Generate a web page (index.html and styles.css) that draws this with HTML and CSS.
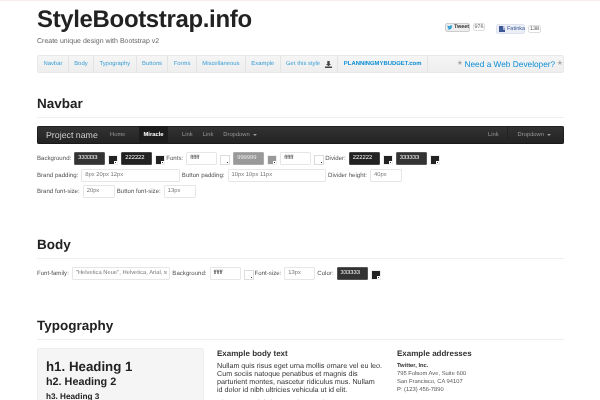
FILE: index.html
```html
<!DOCTYPE html>
<html lang="en">
<head>
<meta charset="utf-8">
<title>StyleBootstrap.info</title>
<link rel="stylesheet" href="styles.css">
</head>
<body>
<div class="page">
  <header class="masthead">
    <div class="brand-block">
      <h1 class="site-title">StyleBootstrap.info</h1>
      <p class="tagline">Create unique design with Bootstrap v2</p>
    </div>
    <div class="social">
      <span class="tweet"><svg class="bird" viewBox="0 0 10 8"><path d="M0 6.800c3 1.600 8 .4 8.300-4.600L9.500 1 8.200 1.200C7.300-.2 5-.2 4.800 2 3.300 2 2 1.200 1 .2c-.6 1.200-.2 2.300.6 3L.8 3c0 1 .7 1.700 1.500 2H1.500c.3.700 1 1.100 1.700 1.100C2.300 6.800 1.200 7 0 6.800z"/></svg>Tweet</span>
      <span class="count count-tw">976</span>
      <span class="fb"><span class="fb-logo">f</span>Fatinka</span>
      <span class="count count-fb">138</span>
    </div>
  </header>

  <nav class="subnav">
    <a class="nav-item">Navbar</a>
    <a class="nav-item">Body</a>
    <a class="nav-item">Typography</a>
    <a class="nav-item">Buttons</a>
    <a class="nav-item">Forms</a>
    <a class="nav-item">Miscellaneous</a>
    <a class="nav-item">Example</a>
    <a class="nav-item">Get this style <svg class="dl" viewBox="0 0 7 7"><path d="M2.300 0h2.400v3h1.300L3.500 5.300 1 3h1.300zM0 5.500h7V7H0z"/></svg></a>
    <a class="nav-item nav-strong">PLANNINGMYBUDGET.com</a>
    <div class="nav-ad"><span class="star">★</span><a class="ad-link">Need a Web Developer?</a><span class="star">★</span></div>
  </nav>

  <section class="sec sec-navbar">
    <h2 class="sec-title">Navbar</h2>
    <div class="demo-bar">
      <span class="demo-brand">Project name</span>
      <a class="demo-link demo-home">Home</a>
      <a class="demo-link demo-active">Miracle</a>
      <a class="demo-link demo-first">Link</a>
      <a class="demo-link">Link</a>
      <a class="demo-link">Dropdown <i class="caret"></i></a>
      <a class="demo-link demo-right">Link</a>
      <a class="demo-link demo-drop">Dropdown <i class="caret"></i></a>
    </div>
    <div class="row">
      <span class="lbl">Background:</span><span class="fld w31 dk3">333333</span><span class="pick pick-dark"></span>
      <span class="fld w31 dk2">222222</span><span class="pick pick-dark tight"></span>
      <span class="lbl">Fonts:</span><span class="fld w31 lt">ffffff</span><span class="pick pick-light"></span>
      <span class="fld w31 gr">999999</span><span class="pick pick-gray"></span>
      <span class="fld w31 lt">ffffff</span><span class="pick pick-light tight"></span>
      <span class="lbl">Divider:</span><span class="fld w31 dk2">222222</span><span class="pick pick-dark"></span>
      <span class="fld w31 dk3">333333</span><span class="pick pick-dark"></span>
    </div>
    <div class="row">
      <span class="lbl">Brand padding:</span><span class="fld w99">8px 20px 12px</span>
      <span class="lbl after">Button padding:</span><span class="fld w99">10px 10px 11px</span>
      <span class="lbl after">Divider height:</span><span class="fld w32">40px</span>
    </div>
    <div class="row">
      <span class="lbl">Brand font-size:</span><span class="fld w32">20px</span>
      <span class="lbl after">Button font-size:</span><span class="fld w32">13px</span>
    </div>
  </section>

  <section class="sec sec-body">
    <h2 class="sec-title">Body</h2>
    <div class="row">
      <span class="lbl">Font-family:</span><span class="fld w99">"Helvetica Neue", Helvetica, Arial, s</span>
      <span class="lbl after">Background:</span><span class="fld w31 lt">ffffff</span><span class="pick pick-light tight"></span>
      <span class="lbl">Font-size:</span><span class="fld w31">13px</span>
      <span class="lbl after">Color:</span><span class="fld w31 dk3">333333</span><span class="pick pick-dark"></span>
    </div>
  </section>

  <section class="sec sec-type">
    <h2 class="sec-title">Typography</h2>
    <div class="type-grid">
      <div class="well">
        <div class="h1">h1. Heading 1</div>
        <div class="h2">h2. Heading 2</div>
        <div class="h3">h3. Heading 3</div>
      </div>
      <div class="copy">
        <h3 class="col-title">Example body text</h3>
        <p class="para">Nullam quis risus eget urna mollis ornare vel eu leo. Cum sociis natoque penatibus et magnis dis parturient montes, nascetur ridiculus mus. Nullam<br>id dolor id nibh ultricies vehicula ut id elit.</p>
        <p class="para">Vivamus sagittis lacus vel augue laoreet rutrum</p>
      </div>
      <div class="addr">
        <h3 class="col-title">Example addresses</h3>
        <address class="address"><b>Twitter, Inc.</b><br>795 Folsom Ave, Suite 600<br>San Francisco, CA 94107<br>P: (123) 456-7890</address>
      </div>
    </div>
  </section>
</div>
</body>
</html>
```
FILE: styles.css
```css
* { box-sizing: border-box; }
html, body { height: 100%; }
body {
  margin: 0;
  overflow: hidden;
  background: #fff;
  color: #333;
  font-family: "Liberation Sans", Arial, sans-serif;
  font-size: 6.5px;
  border-top: 1px solid #f7efec;
  text-rendering: geometricPrecision;
}
.page { width: 527px; margin-left: 37px; filter: blur(0.3px); }

/* masthead */
.masthead { display: flex; justify-content: space-between; height: 54px; }
.site-title { margin: 7px 0 0; font-size: 24px; line-height: 24px; font-weight: 700; color: #222; letter-spacing: -.35px; }
.tagline { margin: 5px 0 0; font-size: 7px; line-height: 9px; color: #666; }
.social { display: flex; align-items: flex-start; padding: 22px 23px 0 0; }
.tweet { display: flex; align-items: center; width: 25px; height: 9px; border: 1px solid #ccc; border-radius: 2px; background: #eee; font-size: 5.500px; line-height: 7px; font-weight: 700; color: #333; white-space: nowrap; overflow: hidden; }
.bird { width: 6px; height: 5px; margin: 0 1px; fill: #2f9fd6; flex: none; }
.count { height: 8px; margin-left: 3px; border: 1px solid #ddd; border-radius: 2px; font-size: 5.500px; line-height: 6px; color: #555; text-align: center; }
.count-tw { width: 12px; margin-right: 11px; }
.count-fb { width: 13px; margin-top: 2px; }
.fb { display: flex; align-items: center; width: 29px; height: 10px; margin-top: 1px; background: #eceef5; border: 1px solid #dfe3ef; border-radius: 2px; font-size: 5.500px; color: #3b5998; }
.fb-logo { width: 6px; height: 6px; margin: 0 2px; background: #3b5998; color: #fff; font-size: 6px; line-height: 7px; font-weight: 700; text-align: right; flex: none; }

/* sub navigation */
.subnav { display: flex; align-items: stretch; height: 18px; background: linear-gradient(#f5f5f5, #eee); border: 1px solid #e8e8e8; border-radius: 2px; }
.nav-item { display: flex; align-items: center; padding: 0 5.400px; border-right: 1px solid #e4e4e4; font-size: 5.900px; color: #3a9fd6; white-space: nowrap; }
.nav-strong { font-weight: 700; color: #0f8fd6; }
.dl { width: 7px; height: 7px; margin-left: 5px; fill: #444; }
.nav-ad { display: flex; align-items: center; margin-left: auto; font-size: 8.300px; white-space: nowrap; }
.ad-link { color: #0f8fd6; margin: 0 1.500px; }
.star { color: #aaa; font-size: 7px; position: relative; top: -1.500px; }

/* sections */
.sec-title { margin: 0 0 8.500px; height: 21.500px; font-size: 13.500px; line-height: 16px; font-weight: 700; color: #222; border-bottom: 1px solid #eee; }
.sec-navbar { margin-top: 23px; }
.sec-body { margin-top: 39px; }
.sec-type { margin-top: 38px; }

/* navbar demo */
.demo-bar { display: flex; align-items: stretch; height: 18px; margin: 0 0 8px; background: linear-gradient(#333, #222); border-radius: 2px; box-shadow: inset 0 0 0 .5px #111; font-size: 5.800px; color: #999; }
.demo-brand { align-self: center; width: 68px; padding-left: 9px; font-size: 8.800px; color: #ccc; white-space: nowrap; }
.demo-link { display: flex; align-items: center; padding: 0 5px; white-space: nowrap; gap: 3px; }
.demo-home { width: 32px; padding-right: 0; }
.demo-active { width: 29px; justify-content: center; background: #1c1c1c; color: #fff; font-weight: 700; margin-left: 2px; }
.demo-first { margin-left: 8px; padding-left: 6px; }
.demo-right { margin-left: auto; padding-right: 8px; border-right: 1px solid #222; }
.demo-drop { padding: 0 13px 0 10px; }
.caret { display: inline-block; width: 0; height: 0; border: 2px solid transparent; border-top-color: #999; border-bottom: 0; }

/* form rows */
.row { display: flex; align-items: center; height: 13px; margin-bottom: 3.500px; }
.lbl { margin-right: 3px; color: #555; white-space: nowrap; font-size: 6.100px; }
.after { margin-left: 2px; }
.fld { display: block; flex: none; height: 13px; padding: 0 3px; border: 1px solid #e6e6e6; border-radius: 1px; background: #fff; font-size: 5.800px; line-height: 10.500px; color: #777; white-space: nowrap; overflow: hidden; }
.w31 { width: 31px; }
.w32 { width: 32px; }
.w99 { width: 98.500px; }
.lt { color: #333; }
.dk3 { background: #333; color: #fff; border-color: #555; }
.dk2 { background: #222; color: #fff; border-color: #444; }
.gr { background: #999; color: #eee; border-color: #aaa; }
.pick { position: relative; flex: none; width: 10px; height: 10px; margin: 2px 3px 0 3px; border: 1px solid #eee; }
.pick::after { content: ""; position: absolute; right: 0; bottom: 0; width: 3px; height: 3px; background: #fff; box-shadow: inset 0 0 0 1px #fff, inset 0 0 0 2px #333; }
.tight { margin-right: 1px; }
.pick-dark { background: #222; }
.pick-light { background: #fff; border-color: #ddd; }
.pick-gray { background: #999; }

/* typography */
.type-grid { display: grid; grid-template-columns: 167px 167px 1fr; column-gap: 13px; }
.well { height: 120px; padding: 8.500px 8px 0; background: #f5f5f5; border: 1px solid #eee; border-radius: 2px; font-weight: 700; color: #222; }
.h1 { font-size: 13.300px; line-height: 17px; }
.h2 { font-size: 10.800px; line-height: 15px; }
.h3 { font-size: 8.200px; line-height: 13px; }
.col-title { margin: 1px 0 3px; font-size: 8px; line-height: 10px; font-weight: 700; color: #333; }
.para { margin: 0 0 5px; font-size: 7.200px; line-height: 8px; color: #333; }
.address { font-style: normal; font-size: 5.800px; line-height: 8px; color: #555; }
.address b { color: #333; }
```
